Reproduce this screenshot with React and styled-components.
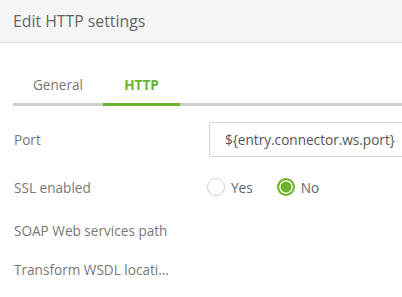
import React from 'react'
import styled, { createGlobalStyle } from 'styled-components'

const Global = createGlobalStyle`
body {
  margin: 0;
  background: #fff;
  font-family: "Open Sans", "Noto Sans", sans-serif;
}
`

const Page = styled.div`
width: 402px;
height: 297px;
overflow: hidden;
background: #fff;
`

const Header = styled.div`
height: 42px;
background: #f5f5f5;
border-bottom: 1px solid #dcdcdc;
display: flex;
align-items: center;
padding-left: 13px;
font-size: 15.8px;
color: #666;
`

const Tabs = styled.div`
display: flex;
margin-left: 13px;
margin-top: 22px;
border-bottom: 3px solid #cfcfcf;
`

const Tab = styled.div`
width: ${p => p.$w}px;
height: 38px;
display: flex;
align-items: center;
justify-content: center;
font-size: 13.6px;
font-weight: ${p => (p.$active ? 700 : 400)};
color: ${p => (p.$active ? '#6cb42c' : '#777')};
margin-bottom: -3px;
border-bottom: 3px solid ${p => (p.$active ? '#6cb42c' : 'transparent')};
`

const Form = styled.div`
display: flex;
flex-direction: column;
padding-top: 16px;
`

const Row = styled.div`
display: flex;
align-items: center;
height: ${p => p.$h}px;
margin-top: ${p => p.$mt || 0}px;
`

const Label = styled.div`
width: 196px;
box-sizing: border-box;
padding: 0 25px 0 14px;
font-size: 13.6px;
color: #777;
white-space: nowrap;
overflow: hidden;
text-overflow: ellipsis;
flex-shrink: 0;
`

const Input = styled.div`
margin-left: 13px;
height: 100%;
box-sizing: border-box;
flex: 1;
margin-right: -20px;
border: 1px solid #d6d6d6;
border-radius: 2px;
display: flex;
align-items: center;
padding-left: 15px;
font-size: 13.6px;
color: #555;
white-space: nowrap;
`

const Radios = styled.div`
display: flex;
align-items: center;
margin-left: 11px;
`

const Option = styled.label`
display: flex;
align-items: center;
gap: 6px;
font-size: 13.6px;
color: #666;
margin-right: ${p => p.$mr || 0}px;
`

const Dot = styled.span`
width: 18px;
height: 18px;
box-sizing: border-box;
border-radius: 50%;
border: ${p => (p.$on ? '2px solid #6cb42c' : '1.5px solid #cfcfcf')};
background: ${p => (p.$on ? '#6cb42c' : '#fff')};
box-shadow: ${p => (p.$on ? 'inset 0 0 0 1.5px #fff' : 'none')};
`

export default function App() {
  return (
    <Page>
      <Global />
      <Header>Edit HTTP settings</Header>
      <Tabs>
        <Tab $w={90}>General</Tab>
        <Tab $w={77} $active>HTTP</Tab>
      </Tabs>
      <Form>
        <Row $h={35}>
          <Label>Port</Label>
          <Input>{'${entry.connector.ws.port}'}</Input>
        </Row>
        <Row $h={32} $mt={14}>
          <Label>SSL enabled</Label>
          <Radios>
            <Option $mr={24}><Dot />Yes</Option>
            <Option><Dot $on />No</Option>
          </Radios>
        </Row>
        <Row $h={32} $mt={11}>
          <Label>SOAP Web services path</Label>
        </Row>
        <Row $h={32} $mt={7}>
          <Label>Transform WSDL location</Label>
        </Row>
      </Form>
    </Page>
  )
}
